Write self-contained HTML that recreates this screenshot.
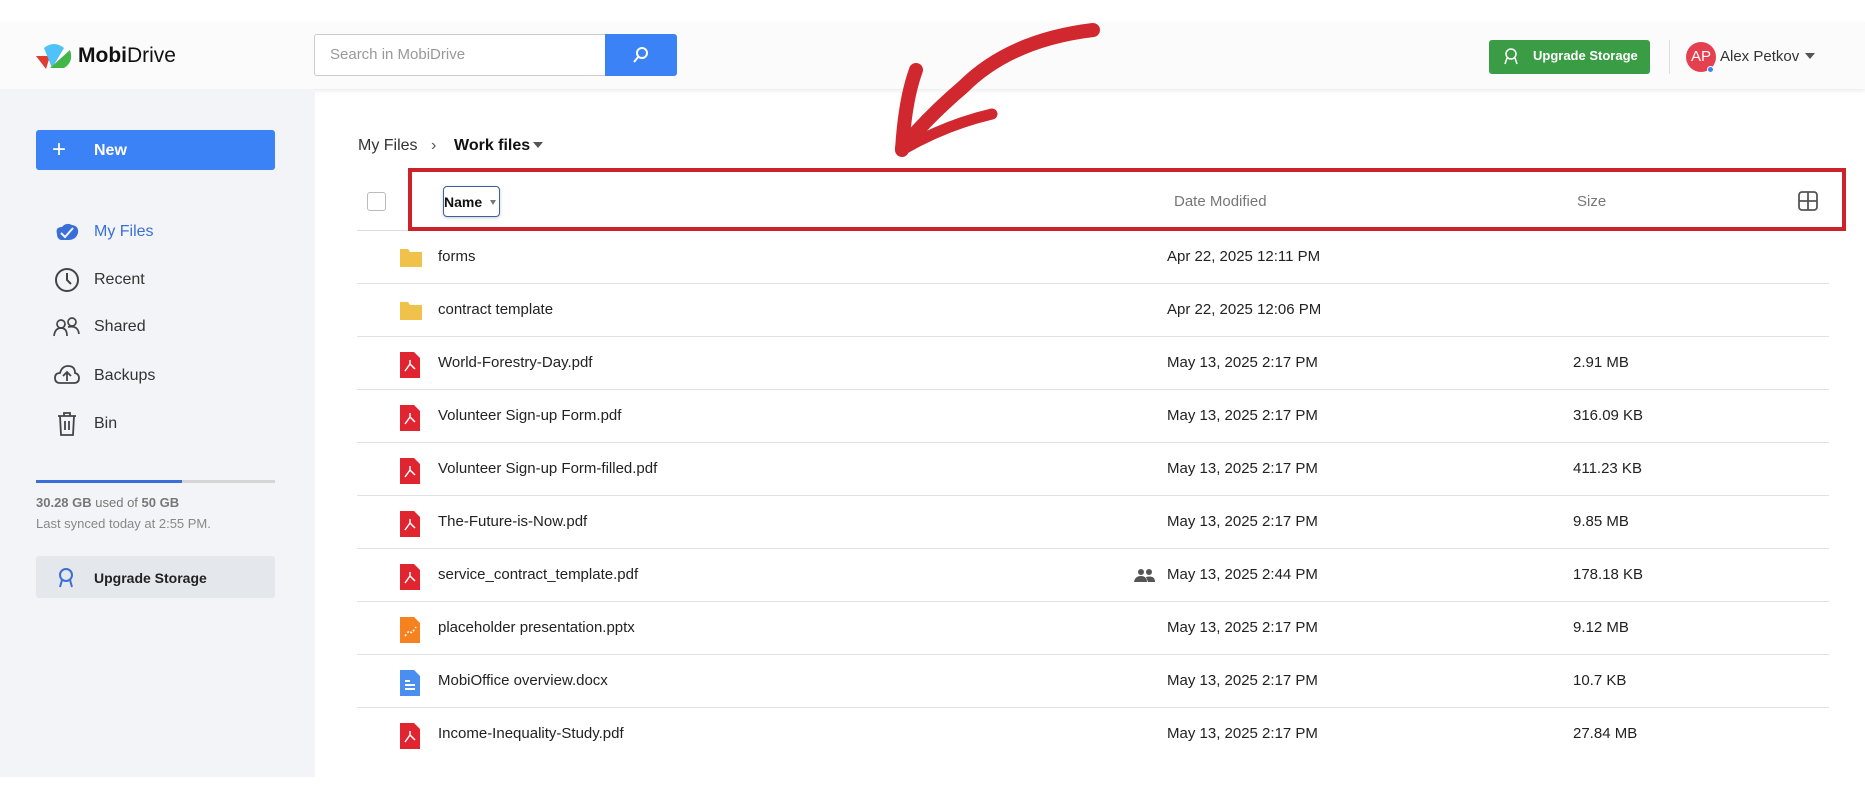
<!DOCTYPE html>
<html><head><meta charset="utf-8"><style>
*{margin:0;padding:0;box-sizing:border-box}
body{width:1865px;height:800px;position:relative;background:#fff;font-family:"Liberation Sans",sans-serif;color:#222;overflow:hidden}
.a{position:absolute}
.hdr{left:0;top:22px;width:1865px;height:67px;background:#fbfbfb;box-shadow:0 2px 4px rgba(0,0,0,.08)}
.side{left:0;top:89px;width:315px;height:688px;background:#f2f4f7}
.nav{left:94px;font-size:16px;color:#333}
.row{left:357px;width:1472px;height:53px;border-bottom:1px solid #e2e2e2}
.row .n{position:absolute;left:81px;top:17px;font-size:15px;color:#222}
.row .d{position:absolute;left:810px;top:17px;font-size:15px;color:#222}
.row .s{position:absolute;left:1216px;top:17px;font-size:15px;color:#222}
.row svg{position:absolute;left:42px;top:15px}
</style></head><body>
<div class="a hdr"></div>
<svg class="a" style="left:34px;top:42px" width="40" height="28" viewBox="0 0 40 28"><path d="M2 14 L12 27 L16 14 Z" fill="#e03c31"/><path d="M10 6 Q20 -2 30 6 L18 26 Z" fill="#4fc3f7"/><path d="M16 26 L36 8 Q40 20 30 26 Z" fill="#43b649"/></svg>
<div class="a" style="left:78px;top:44px;font-size:21px;color:#111"><b>Mobi</b>Drive</div>
<div class="a" style="left:314px;top:34px;width:292px;height:42px;border:1px solid #ccc;border-right:none;border-radius:3px 0 0 3px;background:#fff"></div>
<div class="a" style="left:330px;top:46px;font-size:15px;color:#999">Search in MobiDrive</div>
<div class="a" style="left:605px;top:34px;width:72px;height:42px;background:#3b82f6;border-radius:0 3px 3px 0"></div>
<svg class="a" style="left:631px;top:45px" width="20" height="20" viewBox="0 0 20 20"><circle cx="11" cy="8" r="5" fill="none" stroke="#fff" stroke-width="2"/><path d="M8 11 L3 17" stroke="#fff" stroke-width="2"/></svg>
<div class="a" style="left:1489px;top:40px;width:161px;height:34px;background:#3a9d46;border-radius:3px"></div>
<svg class="a" style="left:1503px;top:47px" width="16" height="20" viewBox="0 0 16 20"><circle cx="8" cy="7" r="5" fill="none" stroke="#fff" stroke-width="1.5"/><path d="M4 11 L2 17 M12 11 L14 17" stroke="#fff" stroke-width="1.5"/></svg>
<div class="a" style="left:1533px;top:48px;font-size:13px;color:#fff;font-weight:bold">Upgrade Storage</div>
<div class="a" style="left:1669px;top:40px;width:1px;height:34px;background:#ddd"></div>
<div class="a" style="left:1686px;top:42px;width:30px;height:30px;border-radius:50%;background:#e5404f;color:#fff;font-size:15px;text-align:center;line-height:30px">AP</div>
<div class="a" style="left:1707px;top:66px;width:7px;height:7px;border-radius:50%;background:#3b82f6;border:1px solid #fff"></div>
<div class="a" style="left:1720px;top:48px;font-size:15px;color:#333">Alex Petkov</div>
<div class="a" style="left:1805px;top:53px;border:5px solid transparent;border-top:6px solid #555"></div>

<div class="a side"></div>
<div class="a" style="left:36px;top:130px;width:239px;height:40px;background:#3b82f6;border-radius:3px"></div>
<div class="a" style="left:52px;top:136px;font-size:24px;color:#fff">+</div>
<div class="a" style="left:94px;top:142px;font-size:16px;color:#fff;font-weight:bold">New</div>
<svg class="a" style="left:54px;top:222px" width="26" height="20" viewBox="0 0 26 20"><path d="M3 12 Q1 5 8 5 Q12 0 18 3 Q25 4 24 11 Q22 18 14 18 L7 18 Q3 17 3 12Z" fill="#3a6fd8"/><path d="M7 11 L11 15 L19 6" stroke="#f2f4f7" stroke-width="2" fill="none"/></svg>
<div class="a nav" style="top:223px;color:#3a6fd8">My Files</div>
<svg class="a" style="left:54px;top:267px" width="26" height="26"><circle cx="13" cy="13" r="11" fill="none" stroke="#444" stroke-width="2"/><path d="M13 6 V13 L17 17" stroke="#444" stroke-width="2" fill="none"/></svg>
<div class="a nav" style="top:271px">Recent</div>
<svg class="a" style="left:53px;top:316px" width="28" height="22"><circle cx="8" cy="8" r="4" fill="none" stroke="#444" stroke-width="1.7"/><circle cx="19" cy="6" r="4" fill="none" stroke="#444" stroke-width="1.7"/><path d="M1 20 Q2 12 8 12 Q14 12 14 20 M15 11 Q25 9 26 18" stroke="#444" stroke-width="1.7" fill="none"/></svg>
<div class="a nav" style="top:318px">Shared</div>
<svg class="a" style="left:54px;top:364px" width="26" height="22"><path d="M6 19 Q1 19 1 14 Q1 9 6 9 Q8 2 14 2 Q21 2 21 9 Q25 10 25 14 Q25 19 20 19 Z" fill="none" stroke="#444" stroke-width="1.8"/><path d="M13 17 V9 M9 12 L13 8 L17 12" stroke="#444" stroke-width="1.8" fill="none"/></svg>
<div class="a nav" style="top:367px">Backups</div>
<svg class="a" style="left:56px;top:411px" width="22" height="26"><path d="M2 5 H20 M8 5 V2 H14 V5 M4 5 L5 24 H17 L18 5 M9 10 V19 M13 10 V19" stroke="#444" stroke-width="1.8" fill="none"/></svg>
<div class="a nav" style="top:415px">Bin</div>
<div class="a" style="left:36px;top:480px;width:239px;height:3px;background:#d5d5d5"></div>
<div class="a" style="left:36px;top:480px;width:146px;height:3px;background:#3a6fd8"></div>
<div class="a" style="left:36px;top:495px;font-size:13px;color:#777"><b>30.28 GB</b> used of <b>50 GB</b></div>
<div class="a" style="left:36px;top:516px;font-size:13px;color:#888">Last synced today at 2:55 PM.</div>
<div class="a" style="left:36px;top:556px;width:239px;height:42px;background:#e4e7eb;border-radius:3px"></div>
<svg class="a" style="left:57px;top:566px" width="18" height="24"><circle cx="9" cy="9" r="6" fill="none" stroke="#3a6fd8" stroke-width="2"/><path d="M5 14 L3 21 M13 14 L15 21" stroke="#3a6fd8" stroke-width="2"/></svg>
<div class="a" style="left:94px;top:570px;font-size:14px;font-weight:bold;color:#222">Upgrade Storage</div>

<div class="a" style="left:358px;top:137px;font-size:16px;color:#333">My Files</div>
<div class="a" style="left:431px;top:137px;font-size:16px;color:#555">›</div>
<div class="a" style="left:454px;top:137px;font-size:16px;color:#111;font-weight:bold">Work files</div>
<div class="a" style="left:533px;top:142px;border:5px solid transparent;border-top:6px solid #555"></div>

<div class="a" style="left:357px;top:230px;width:1472px;height:1px;background:#ddd"></div>
<div class="a" style="left:367px;top:192px;width:19px;height:19px;border:1px solid #bbb;border-radius:3px;background:#fff"></div>
<div class="a" style="left:443px;top:186px;width:57px;height:31px;border:1px solid #3a5f9c;border-radius:4px;box-shadow:0 1px 3px rgba(0,0,0,.2)"></div>
<div class="a" style="left:444px;top:194px;font-size:14px;font-weight:bold;color:#111">Name</div>
<div class="a" style="left:490px;top:200px;border:3.5px solid transparent;border-top:5px solid #777"></div>
<div class="a" style="left:1174px;top:193px;font-size:15px;color:#777">Date Modified</div>
<div class="a" style="left:1577px;top:193px;font-size:15px;color:#777">Size</div>
<svg class="a" style="left:1798px;top:191px" width="20" height="20"><rect x="1" y="1" width="18" height="18" rx="3" fill="none" stroke="#555" stroke-width="1.8"/><path d="M10 1 V19 M1 10 H19" stroke="#555" stroke-width="1.8"/></svg>
<div class="a" style="left:408px;top:168px;width:1438px;height:63px;border:4px solid #cc2229"></div>

<div class="a row" style="top:231px"><svg width="24" height="22"><path d="M1 3 H9 L11 6 H23 V21 H1Z" fill="#f0c24b"/></svg><div class="n">forms</div><div class="d">Apr 22, 2025 12:11 PM</div></div>
<div class="a row" style="top:284px"><svg width="24" height="22"><path d="M1 3 H9 L11 6 H23 V21 H1Z" fill="#f0c24b"/></svg><div class="n">contract template</div><div class="d">Apr 22, 2025 12:06 PM</div></div>
<div class="a row" style="top:337px"><svg width="22" height="26"><path d="M1 0 H15 L21 6 V26 H1Z" fill="#e02530"/><path d="M6 19 L11 12 L16 17 M11 12 V8" stroke="#fff" stroke-width="1.5" fill="none"/></svg><div class="n">World-Forestry-Day.pdf</div><div class="d">May 13, 2025 2:17 PM</div><div class="s">2.91 MB</div></div>
<div class="a row" style="top:390px"><svg width="22" height="26"><path d="M1 0 H15 L21 6 V26 H1Z" fill="#e02530"/><path d="M6 19 L11 12 L16 17 M11 12 V8" stroke="#fff" stroke-width="1.5" fill="none"/></svg><div class="n">Volunteer Sign-up Form.pdf</div><div class="d">May 13, 2025 2:17 PM</div><div class="s">316.09 KB</div></div>
<div class="a row" style="top:443px"><svg width="22" height="26"><path d="M1 0 H15 L21 6 V26 H1Z" fill="#e02530"/><path d="M6 19 L11 12 L16 17 M11 12 V8" stroke="#fff" stroke-width="1.5" fill="none"/></svg><div class="n">Volunteer Sign-up Form-filled.pdf</div><div class="d">May 13, 2025 2:17 PM</div><div class="s">411.23 KB</div></div>
<div class="a row" style="top:496px"><svg width="22" height="26"><path d="M1 0 H15 L21 6 V26 H1Z" fill="#e02530"/><path d="M6 19 L11 12 L16 17 M11 12 V8" stroke="#fff" stroke-width="1.5" fill="none"/></svg><div class="n">The-Future-is-Now.pdf</div><div class="d">May 13, 2025 2:17 PM</div><div class="s">9.85 MB</div></div>
<div class="a row" style="top:549px"><svg width="22" height="26"><path d="M1 0 H15 L21 6 V26 H1Z" fill="#e02530"/><path d="M6 19 L11 12 L16 17 M11 12 V8" stroke="#fff" stroke-width="1.5" fill="none"/></svg><div class="n">service_contract_template.pdf</div>
<svg style="left:777px;top:19px" width="22" height="16"><circle cx="7" cy="4" r="3" fill="#555"/><circle cx="15" cy="4" r="3" fill="#555"/><path d="M0 14 Q1 8 7 8 Q13 8 13 14Z M12 9 Q21 7 21 14 H14Z" fill="#555"/></svg>
<div class="d">May 13, 2025 2:44 PM</div><div class="s">178.18 KB</div></div>
<div class="a row" style="top:602px"><svg width="22" height="26"><path d="M1 0 H15 L21 6 V26 H1Z" fill="#f5821f"/><path d="M6 19 L10 14 L13 16 L17 10" stroke="#fff" stroke-width="1.5" stroke-dasharray="2 2" fill="none"/></svg><div class="n">placeholder presentation.pptx</div><div class="d">May 13, 2025 2:17 PM</div><div class="s">9.12 MB</div></div>
<div class="a row" style="top:655px"><svg width="22" height="26"><path d="M1 0 H15 L21 6 V26 H1Z" fill="#4a8ef0"/><path d="M6 11 H11 M6 15 H16 M6 19 H16" stroke="#fff" stroke-width="2"/></svg><div class="n">MobiOffice overview.docx</div><div class="d">May 13, 2025 2:17 PM</div><div class="s">10.7 KB</div></div>
<div class="a row" style="top:708px;border-bottom:none"><svg width="22" height="26"><path d="M1 0 H15 L21 6 V26 H1Z" fill="#e02530"/><path d="M6 19 L11 12 L16 17 M11 12 V8" stroke="#fff" stroke-width="1.5" fill="none"/></svg><div class="n">Income-Inequality-Study.pdf</div><div class="d">May 13, 2025 2:17 PM</div><div class="s">27.84 MB</div></div>

<svg class="a" style="left:0;top:0" width="1865" height="200">
<path d="M1093 30 Q1010 40 963 87 Q930 115 902 148" stroke="#d0282e" stroke-width="14" fill="none" stroke-linecap="round"/>
<path d="M902 150 Q905 100 916 70" stroke="#d0282e" stroke-width="14" fill="none" stroke-linecap="round"/>
<path d="M902 150 Q945 125 992 114" stroke="#d0282e" stroke-width="11" fill="none" stroke-linecap="round"/>
</svg>
</body></html>
